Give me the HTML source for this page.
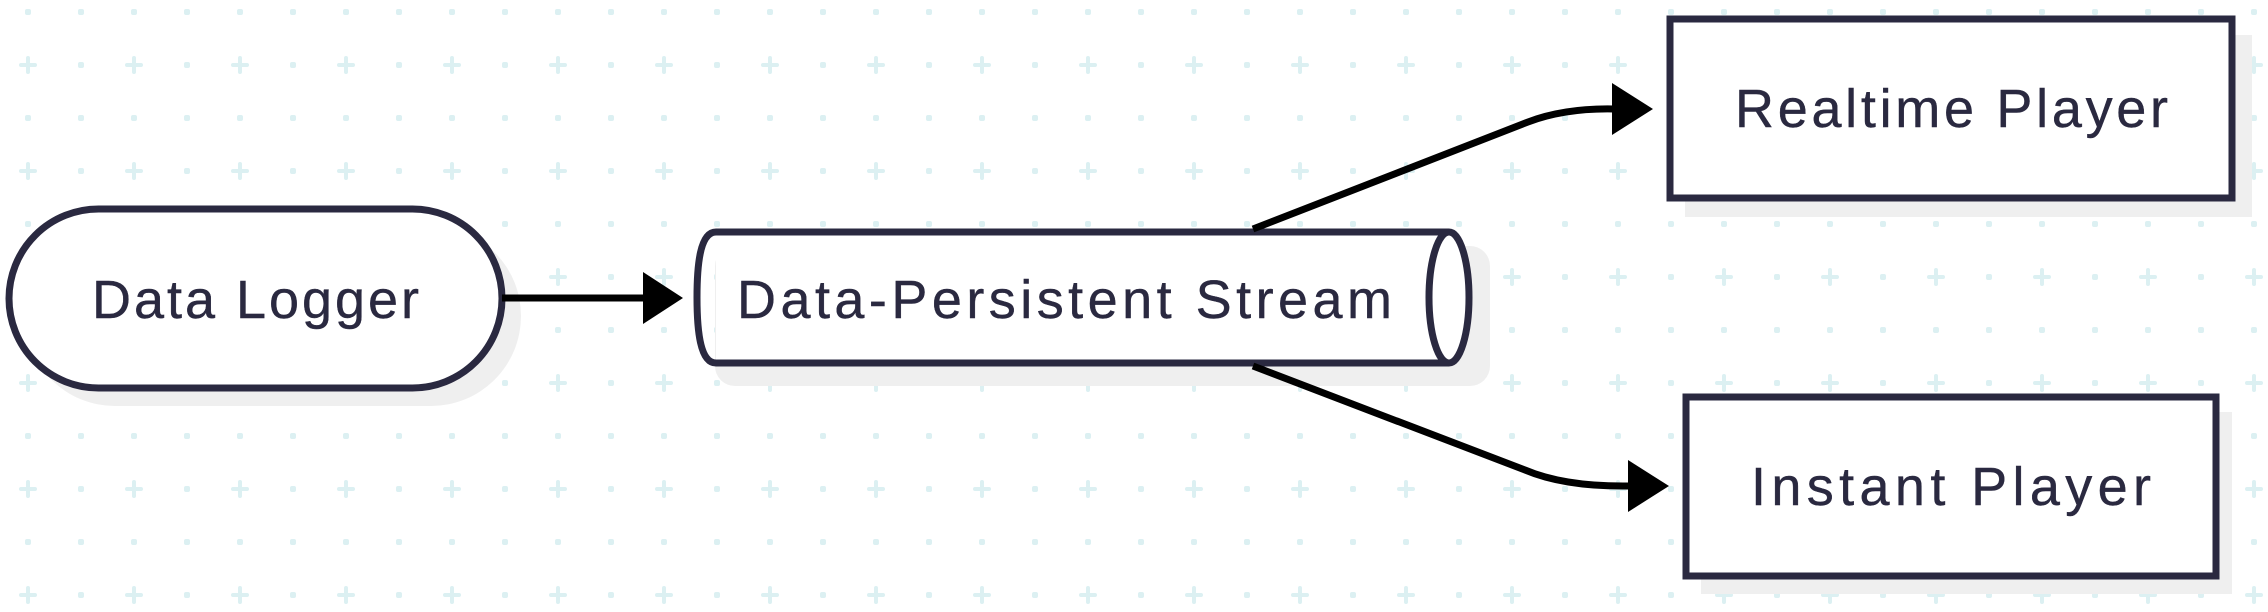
<!DOCTYPE html>
<html><head><meta charset="utf-8"><style>
html,body{margin:0;padding:0;background:#fff;}
svg{display:block;}
text{font-family:"Liberation Sans",sans-serif;font-size:54px;fill:#2a2940;stroke:#2a2940;stroke-width:0.4;}
</style></head><body>
<svg width="2268" height="612" viewBox="0 0 2268 612" xmlns="http://www.w3.org/2000/svg">
<defs>
<pattern id="g" x="0" y="0" width="106" height="106" patternUnits="userSpaceOnUse">
<g fill="#dcf0f2">
<rect x="25" y="9" width="6" height="6" rx="2"/>
<rect x="78" y="9" width="6" height="6" rx="2"/>
<rect x="78" y="62" width="6" height="6" rx="2"/>
<rect x="19" y="63" width="18" height="4" rx="2"/>
<rect x="26" y="56" width="4" height="18" rx="2"/>
</g>
</pattern>
</defs>
<rect width="2268" height="612" fill="#fff"/>
<rect width="2268" height="612" fill="url(#g)"/>

<g fill="#efefef">
<rect x="25" y="226" width="496" height="180" rx="90"/>
<rect x="715" y="246" width="775" height="140" rx="20"/>
<rect x="1685" y="35" width="567" height="182"/>
<rect x="1701" y="412" width="531" height="182"/>
</g>

<g stroke="#2a2940" stroke-width="7" fill="#fff">
<rect x="9" y="209" width="493" height="179" rx="89.5"/>
<path d="M716 232 H1449 V363 H716 Z" stroke="none"/>
<path d="M716 232 H1449 M716 363 H1449 M716 232 C700 232 697 265 697 297.5 C697 330 700 363 716 363" fill="none"/>
<ellipse cx="1449" cy="297.5" rx="20" ry="65.5"/>
<rect x="1670" y="19" width="562" height="179"/>
<rect x="1686" y="397" width="530" height="179"/>
</g>

<g stroke="#000" stroke-width="7" fill="none">
<path d="M502 298 H646"/>
<path d="M1253 229 L1528 122 Q1565 108 1614 109"/>
<path d="M1253 366 L1525 470 Q1565 487 1630 486"/>
</g>
<g fill="#000">
<path d="M643 272 L683 298 L643 324 Z"/>
<path d="M1612 83 L1653 109 L1612 135 Z"/>
<path d="M1628 460 L1669 486 L1628 512 Z"/>
</g>

<text x="92" y="318" textLength="327" lengthAdjust="spacing">Data Logger</text>
<text x="737" y="318" textLength="655" lengthAdjust="spacing">Data-Persistent Stream</text>
<text x="1735" y="127" textLength="433" lengthAdjust="spacing">Realtime Player</text>
<text x="1751" y="505" textLength="400" lengthAdjust="spacing">Instant Player</text>
</svg>
</body></html>
